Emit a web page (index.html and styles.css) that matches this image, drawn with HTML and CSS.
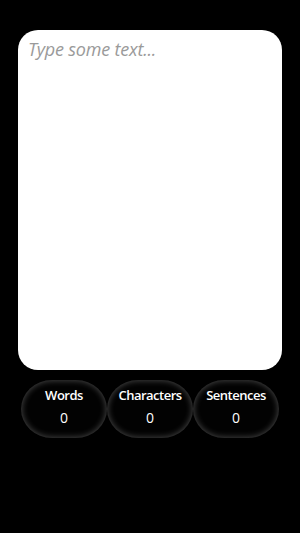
FILE: index.html
```html
<!DOCTYPE html>
<html lang="en">
<head>
    <meta charset="UTF-8">
    <title>Word Counter</title>
    <link rel="stylesheet" href="styles.css">
</head>
<body>
    <div id="counter">
        <textarea id="input" placeholder="Type some text..."></textarea>
        <div class="stats">
            <div class="stat">
                <div class="label">Words</div>
                <div class="value" id="words">0</div>
            </div>
            <div class="stat">
                <div class="label">Characters</div>
                <div class="value" id="chars">0</div>
            </div>
            <div class="stat">
                <div class="label">Sentences</div>
                <div class="value" id="sentences">0</div>
            </div>
        </div>
    </div>
</body>
</html>
```

FILE: styles.css
```css
* {
    box-sizing: border-box;
}

body {
    font-family: 'Open Sans', 'Segoe UI', sans-serif;
    background: #000;
    color: #fff;
    margin: 0;
}

#counter {
    padding: 30px 18px 0;
}

#input {
    display: block;
    width: 100%;
    height: 340px;
    border: none;
    border-radius: 20px;
    background: #fff;
    padding: 7px 10px;
    font-family: 'Open Sans', sans-serif;
    font-size: 18px;
    resize: none;
    outline: none;
}

#input::placeholder {
    color: #9a9a9a;
    font-style: italic;
    letter-spacing: -0.2px;
}

.stats {
    display: flex;
    margin: 10px 3px 0;
}

.stat {
    flex: 1;
    height: 58px;
    border-radius: 32px / 30px;
    background: #020202;
    box-shadow: inset 0 0 7px rgba(255, 255, 255, 0.32);
    text-align: center;
    padding-top: 6px;
}

.label {
    font-size: 13px;
    font-weight: 600;
    letter-spacing: -0.5px;
}

.value {
    font-size: 14px;
    margin-top: 4px;
}
```
